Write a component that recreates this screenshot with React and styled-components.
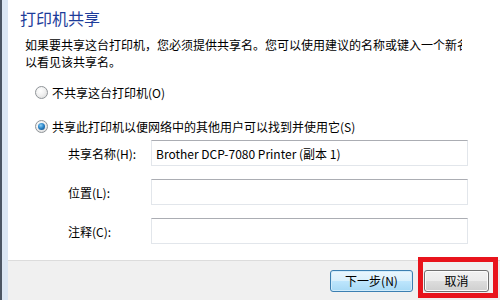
import React from "react";
import styled, { createGlobalStyle } from "styled-components";

const GlobalStyle = createGlobalStyle`
  html, body {
    margin: 0;
    padding: 0;
    width: 500px;
    height: 300px;
    overflow: hidden;
    background: #ffffff;
  }
  * { box-sizing: border-box; }
`;

const FONT = `"Noto Sans CJK SC", "Noto Sans", sans-serif`;

const Window = styled.div`
  position: relative;
  display: flex;
  width: 500px;
  height: 300px;
  font-family: ${FONT};
  color: #000;
`;

const Frame = styled.div`
  width: 8px;
  flex: none;
  border-left: 2px solid #4b5563;
  background: #dbe6f3;
`;

const Main = styled.div`
  flex: 1;
  display: flex;
  flex-direction: column;
  min-width: 0;
`;

const Content = styled.div`
  flex: 1;
  background: #ffffff;
  padding: 8px 0 0 12px;
  display: flex;
  flex-direction: column;
`;

const Title = styled.h1`
  margin: 0;
  font-size: 16px;
  line-height: 20px;
  font-weight: normal;
  color: #1d3c9a;
`;

const Description = styled.div`
  margin: 8px 0 0 5px;
  width: 437px;
  font-size: 12px;
  line-height: 17px;
`;

const DescLine = styled.div`
  white-space: nowrap;
  overflow: hidden;
`;

const RadioRow = styled.label`
  display: flex;
  align-items: center;
  gap: 4px;
  height: 17px;
  margin: ${(p) => p.$top}px 0 0 15px;
  font-size: 12px;
  line-height: 17px;
`;

const RadioDot = styled.span`
  position: relative;
  width: 13px;
  height: 13px;
  border-radius: 50%;
  border: 1px solid #8f9498;
  background: radial-gradient(circle at 40% 35%, #ffffff 0%, #f1f1f1 45%, #d6d6d6 100%);
  flex: none;
  &::after {
    content: "";
    display: ${(p) => (p.$checked ? "block" : "none")};
    position: absolute;
    left: 2px;
    top: 2px;
    width: 7px;
    height: 7px;
    border-radius: 50%;
    background: radial-gradient(circle at 40% 35%, #8fd0f5 0%, #2c86c9 45%, #0f3f73 100%);
  }
`;

const Fields = styled.div`
  margin: 5px 0 0 48px;
  display: flex;
  flex-direction: column;
  gap: 13px;
`;

const FieldRow = styled.div`
  display: flex;
  align-items: center;
  height: 26px;
`;

const FieldLabel = styled.span`
  width: 83px;
  flex: none;
  font-size: 12px;
`;

const TextBox = styled.div`
  width: 317px;
  height: 26px;
  border: 1px solid #e2e6eb;
  border-top-color: #abadb3;
  background: #fff;
  padding: 0 4px;
  display: flex;
  align-items: center;
  font-size: 12px;
  white-space: nowrap;
`;

const Footer = styled.div`
  height: 40px;
  flex: none;
  background: #f0f0f0;
  border-top: 1px solid #dcdcdc;
  display: flex;
  align-items: center;
  justify-content: flex-end;
  gap: 11px;
  padding-right: 11px;
`;

const Button = styled.button`
  height: 22px;
  width: ${(p) => p.$w}px;
  border-radius: 3px;
  font-family: ${FONT};
  font-size: 12px;
  color: #000;
  padding: 0;
  border: 1px solid ${(p) => (p.$primary ? "#3c7fb1" : "#707070")};
  background: ${(p) =>
    p.$primary
      ? "linear-gradient(#eaf6fd 0%, #d9f0fc 50%, #bee6fd 50%, #a7d9f5 100%)"
      : "linear-gradient(#f2f2f2 0%, #ebebeb 50%, #dddddd 50%, #cfcfcf 100%)"};
  box-shadow: inset 0 0 0 1px ${(p) => (p.$primary ? "#d1ecfb" : "#fcfcfc")};
`;

const Annotation = styled.div`
  position: absolute;
  left: 418px;
  top: 257px;
  width: 80px;
  height: 41px;
  border: 5px solid #e8141c;
  pointer-events: none;
`;

export default function App() {
  return (
    <>
      <GlobalStyle />
      <Window>
        <Frame />
        <Main>
          <Content>
            <Title>打印机共享</Title>
            <Description>
              <DescLine>
                如果要共享这台打印机，您必须提供共享名。您可以使用建议的名称或键入一个新名称。其他用户将可
              </DescLine>
              <DescLine>以看见该共享名。</DescLine>
            </Description>
            <RadioRow $top={14}>
              <RadioDot />
              不共享这台打印机(O)
            </RadioRow>
            <RadioRow $top={17}>
              <RadioDot $checked />
              共享此打印机以便网络中的其他用户可以找到并使用它(S)
            </RadioRow>
            <Fields>
              <FieldRow>
                <FieldLabel>共享名称(H):</FieldLabel>
                <TextBox>Brother DCP-7080 Printer (副本 1)</TextBox>
              </FieldRow>
              <FieldRow>
                <FieldLabel>位置(L):</FieldLabel>
                <TextBox />
              </FieldRow>
              <FieldRow>
                <FieldLabel>注释(C):</FieldLabel>
                <TextBox />
              </FieldRow>
            </Fields>
          </Content>
          <Footer>
            <Button $primary $w={83}>下一步(N)</Button>
            <Button $w={65}>取消</Button>
          </Footer>
        </Main>
        <Annotation />
      </Window>
    </>
  );
}
